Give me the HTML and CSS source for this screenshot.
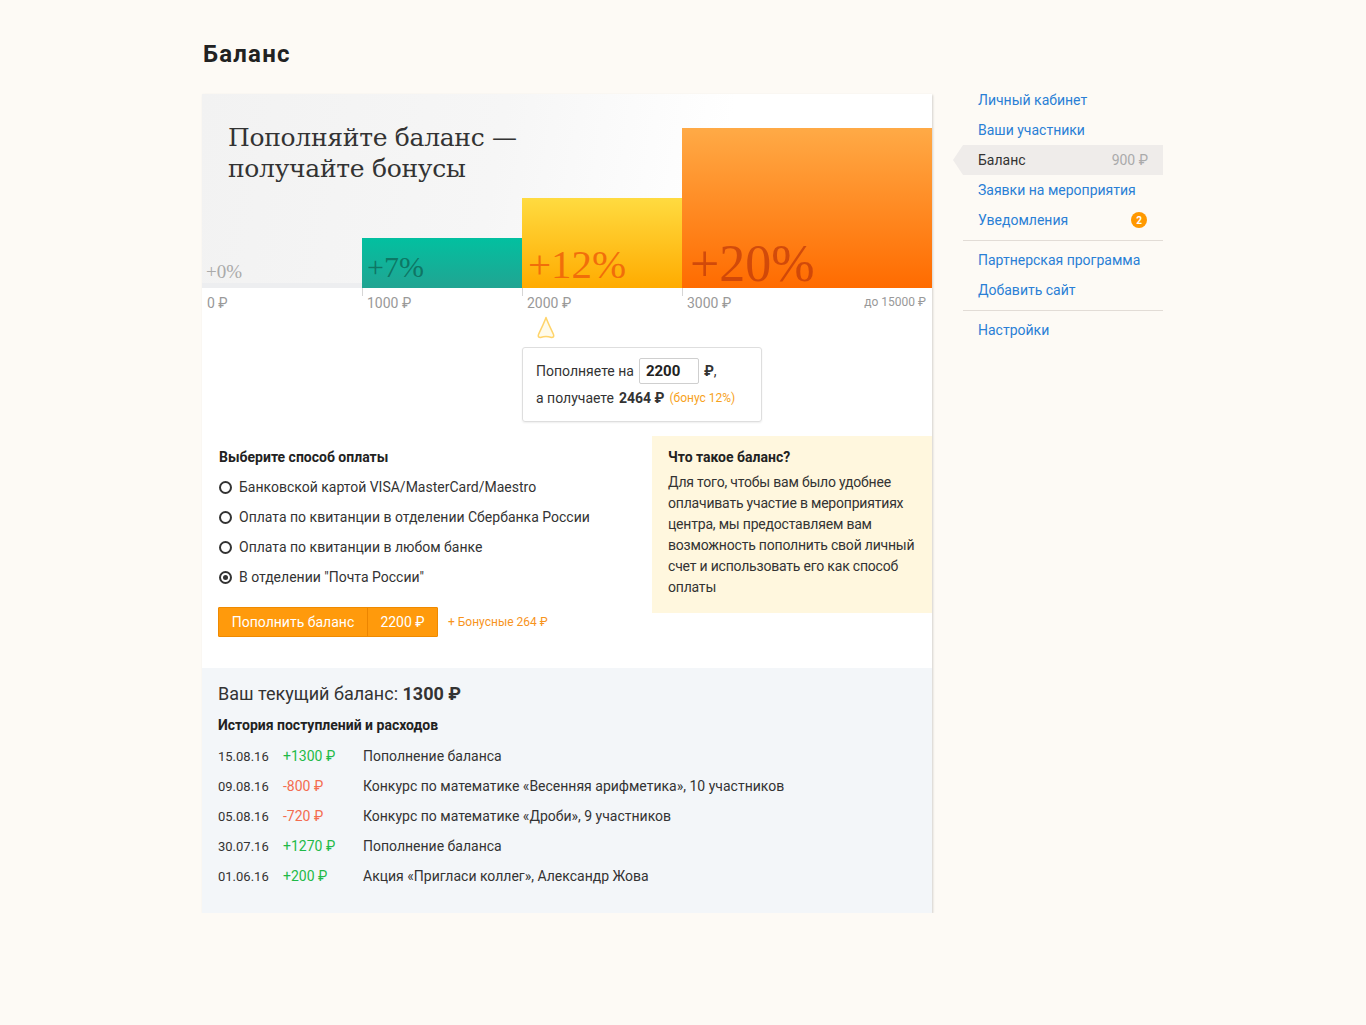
FILE: index.html
```html
<!DOCTYPE html>
<html lang="ru">
<head>
<meta charset="utf-8">
<title>Баланс</title>
<link rel="stylesheet" href="styles.css">
</head>
<body>
<div class="page">
  <h1 class="page-title">Баланс</h1>
  <div class="layout">
    <main class="card">
      <section class="hero">
        <h2 class="hero-title">Пополняйте баланс —<br>получайте бонусы</h2>
        <div class="bars">
          <div class="seg seg-0"><div class="bar"><span class="pct">+0%</span></div></div>
          <div class="seg seg-7"><div class="bar"><span class="pct">+7%</span></div></div>
          <div class="seg seg-12"><div class="bar"><span class="pct">+12%</span></div></div>
          <div class="seg seg-20"><div class="bar"><span class="pct">+20%</span></div></div>
        </div>
      </section>
      <div class="scale">
        <div class="tick tick-first">0 ₽</div>
        <div class="tick">1000 ₽</div>
        <div class="tick">2000 ₽</div>
        <div class="tick tick-last"><span>3000 ₽</span><span class="max">до 15000 ₽</span></div>
      </div>
      <div class="calc">
        <svg class="pointer" width="20" height="24" viewBox="0 0 20 24"><path d="M10 1.5 C11.5 6 15 13 17.5 18.5 Q18.5 21.5 15.5 21.5 Q10 19.5 4.5 21.5 Q1.5 21.5 2.5 18.5 C5 13 8.5 6 10 1.5 Z" fill="#fffbea" stroke="#ffd46a" stroke-width="1.5" stroke-linejoin="round"/></svg>
        <div class="popup">
          <div class="popup-line">Пополняете на <span class="amount-input">2200</span> <span><b>₽</b>,</span></div>
          <div class="popup-line">а получаете <b>2464 ₽</b> <span class="bonus">(бонус 12%)</span></div>
        </div>
      </div>
      <section class="pay">
        <div class="pay-main">
          <h3 class="pay-title">Выберите способ оплаты</h3>
          <ul class="options">
            <li class="option"><span class="radio"></span>Банковской картой VISA/MasterCard/Maestro</li>
            <li class="option"><span class="radio"></span>Оплата по квитанции в отделении Сбербанка России</li>
            <li class="option"><span class="radio"></span>Оплата по квитанции в любом банке</li>
            <li class="option"><span class="radio radio-on"></span>В отделении "Почта России"</li>
          </ul>
          <div class="actions">
            <button class="btn"><span class="btn-label">Пополнить баланс</span><span class="btn-sum">2200 ₽</span></button>
            <span class="extra">+ Бонусные 264 ₽</span>
          </div>
        </div>
        <aside class="info">
          <h4 class="info-title">Что такое баланс?</h4>
          <p class="info-text">Для того, чтобы вам было удобнее оплачивать участие в мероприятиях центра, мы предоставляем вам возможность пополнить свой личный счет и использовать его как способ оплаты</p>
        </aside>
      </section>
      <section class="history">
        <div class="current">Ваш текущий баланс: <b>1300 ₽</b></div>
        <h4 class="history-title">История поступлений и расходов</h4>
        <ul class="rows">
          <li class="row"><span class="date">15.08.16</span><span class="sum plus">+1300 ₽</span><span class="desc">Пополнение баланса</span></li>
          <li class="row"><span class="date">09.08.16</span><span class="sum minus">-800 ₽</span><span class="desc">Конкурс по математике «Весенняя арифметика», 10 участников</span></li>
          <li class="row"><span class="date">05.08.16</span><span class="sum minus">-720 ₽</span><span class="desc">Конкурс по математике «Дроби», 9 участников</span></li>
          <li class="row"><span class="date">30.07.16</span><span class="sum plus">+1270 ₽</span><span class="desc">Пополнение баланса</span></li>
          <li class="row"><span class="date">01.06.16</span><span class="sum plus">+200 ₽</span><span class="desc">Акция «Пригласи коллег», Александр Жова</span></li>
        </ul>
      </section>
    </main>
    <nav class="side">
      <ul class="menu">
        <li><a class="item" href="#">Личный кабинет</a></li>
        <li><a class="item" href="#">Ваши участники</a></li>
        <li><a class="item item-active" href="#"><span>Баланс</span><span class="item-sum">900 ₽</span></a></li>
        <li><a class="item" href="#">Заявки на мероприятия</a></li>
        <li><a class="item" href="#"><span>Уведомления</span><span class="badge">2</span></a></li>
      </ul>
      <ul class="menu menu-sep">
        <li><a class="item" href="#">Партнерская программа</a></li>
        <li><a class="item" href="#">Добавить сайт</a></li>
      </ul>
      <ul class="menu menu-sep">
        <li><a class="item" href="#">Настройки</a></li>
      </ul>
    </nav>
  </div>
</div>
</body>
</html>
```

FILE: styles.css
```css
* { box-sizing: border-box; }
body {
  margin: 0;
  background: #fdfaf5;
  font-family: Roboto, "Noto Sans", sans-serif;
  font-size: 14px;
  color: #333;
}
ul { list-style: none; margin: 0; padding: 0; }
h1, h2, h3, h4, p { margin: 0; }

.page {
  width: 962px;
  padding-right: 1px;
  margin: 0 auto;
  padding-top: 38px;
}
.page-title {
  font-size: 24px;
  font-weight: 700;
  color: #222;
  line-height: 32px;
  margin-left: 1px;
  margin-bottom: 24px;
  letter-spacing: 1.2px;
}
.layout {
  display: flex;
  align-items: flex-start;
  gap: 31px;
}

/* card */
.card {
  width: 730px;
  background: #fff;
  box-shadow: 1px 1px 2px rgba(0,0,0,0.16);
}

.hero {
  display: grid;
  height: 194px;
  background: linear-gradient(100deg, #f2f2f2 0%, #f6f6f6 40%, #ffffff 70%);
}
.hero-title, .bars { grid-area: 1 / 1; }
.hero-title {
  font-family: "DejaVu Serif", "Liberation Serif", serif;
  font-weight: 400;
  font-size: 25px;
  line-height: 31px;
  color: #333;
  padding: 28px 0 0 26px;
  letter-spacing: -0.3px;
}
.bars {
  display: flex;
  align-items: flex-end;
}
.seg { display: flex; flex-direction: column; justify-content: flex-end; }
.seg-0, .seg-7, .seg-12 { width: 160px; }
.seg-20 { width: 250px; }
.bar {
  display: flex;
  align-items: flex-end;
  position: relative;
}
.pct {
  font-family: "Liberation Serif", "DejaVu Serif", serif;
  line-height: 1;
  padding-left: 5px;
}
.seg-0 .bar {
  height: 5px;
  background: #edeef0;
}
.seg-0 .pct {
  position: absolute;
  left: 0;
  bottom: 7px;
  font-size: 19px;
  color: #aaa;
  padding-left: 4px;
}
.seg-7 .bar {
  height: 50px;
  background: linear-gradient(#02c0a0, #21a492);
}
.seg-7 .pct {
  font-size: 30px;
  color: rgba(10, 80, 66, 0.6);
  padding-bottom: 6px;
}
.seg-12 .bar {
  height: 90px;
  background: linear-gradient(#ffdb40, #ffab00);
}
.seg-12 .pct {
  font-size: 41px;
  color: rgba(240, 100, 10, 0.88);
  padding-left: 6px;
  padding-bottom: 3px;
}
.seg-20 .bar {
  height: 160px;
  background: linear-gradient(#ffaa46, #ff6b00);
}
.seg-20 .pct {
  font-size: 52px;
  color: rgba(190, 55, 10, 0.7);
  padding-left: 8px;
  margin-bottom: -2px;
}

.scale {
  display: flex;
  height: 26px;
  color: #999;
  font-size: 14px;
}
.tick {
  width: 160px;
  padding: 7px 0 0 5px;
  background: linear-gradient(#d6d6d6, #d6d6d6) no-repeat left top / 1px 8px;
}
.tick-first { background: none; }
.tick-last {
  width: 250px;
  display: flex;
  justify-content: space-between;
  padding-right: 6px;
}
.max { font-size: 12px; }

.calc {
  display: flex;
  flex-direction: column;
  align-items: flex-start;
  padding-left: 320px;
  padding-top: 2px;
}
.pointer {
  display: block;
  margin-left: 14px;
  margin-bottom: 7px;
}
.popup {
  width: 240px;
  height: 75px;
  border: 1px solid #dedede;
  border-radius: 3px;
  box-shadow: 0 1px 2px rgba(0,0,0,0.07);
  padding: 9px 13px 0;
}
.popup-line {
  display: flex;
  align-items: center;
  gap: 5px;
  height: 27px;
}
.popup-line b { font-weight: 700; }
.amount-input {
  display: inline-block;
  width: 60px;
  height: 26px;
  line-height: 24px;
  border: 1px solid #cfcfcf;
  border-radius: 2px;
  padding-left: 6px;
  font-weight: 700;
  font-size: 15px;
  color: #222;
}
.bonus { color: #f7a21b; font-size: 12px; }

/* payment */
.pay {
  display: flex;
  justify-content: space-between;
  align-items: flex-start;
  margin-top: 14px;
  padding-bottom: 31px;
}
.pay-main { padding: 12px 0 0 17px; }
.pay-title { font-size: 14px; font-weight: 700; line-height: 18px; color: #222; margin-bottom: 6px; }
.option {
  display: flex;
  align-items: center;
  gap: 7px;
  height: 30px;
}
.radio {
  width: 13px;
  height: 13px;
  border: 2px solid #333;
  border-radius: 50%;
  display: flex;
  align-items: center;
  justify-content: center;
}
.radio-on::after {
  content: "";
  width: 5px;
  height: 5px;
  border-radius: 50%;
  background: #333;
}
.actions {
  display: flex;
  align-items: center;
  gap: 10px;
  margin-top: 15px;
  margin-left: -1px;
}
.btn {
  display: flex;
  height: 30px;
  padding: 0;
  border: 1px solid #ef8a00;
  background: #ff9a0c;
  color: #fff;
  font-family: inherit;
  font-size: 14px;
  border-radius: 1px;
}
.btn-label, .btn-sum {
  display: flex;
  align-items: center;
  justify-content: center;
  height: 28px;
}
.btn-label { width: 149px; border-right: 1px solid #ec8500; }
.btn-sum { width: 69px; }
.extra { color: #f7941d; font-size: 12px; }

.info {
  width: 280px;
  background: #fff7de;
  padding: 13px 10px 15px 16px;
  color: #333;
}
.info-title { font-size: 14px; font-weight: 700; line-height: 16px; color: #222; margin-bottom: 7px; }
.info-text { font-size: 14px; line-height: 21px; letter-spacing: -0.2px; }

/* history */
.history {
  background: #f3f6f9;
  padding: 14px 16px 22px;
}
.current { font-size: 18px; line-height: 24px; color: #333; }
.current b { font-weight: 700; }
.history-title { font-size: 14px; font-weight: 700; line-height: 18px; color: #222; margin-top: 10px; margin-bottom: 7px; }
.row { display: flex; align-items: center; height: 30px; }
.date { width: 65px; font-size: 13px; }
.sum { width: 80px; }
.plus { color: #1fba48; }
.minus { color: #f36c4f; }

/* sidebar */
.side { width: 200px; margin-top: -9px; }
.item {
  display: flex;
  justify-content: space-between;
  align-items: center;
  height: 30px;
  padding: 0 15px;
  color: #2a7fd5;
  text-decoration: none;
  position: relative;
}
.item-active {
  background: #efecea;
  color: #333;
}
.item-active::before {
  content: "";
  position: absolute;
  left: -10px;
  top: 0;
  border-style: solid;
  border-width: 15px 10px 15px 0;
  border-color: transparent #efecea transparent transparent;
}
.item-sum { color: #aaa; }
.badge {
  width: 16px;
  height: 16px;
  border-radius: 50%;
  background: #ff9800;
  color: #fff;
  font-size: 10px;
  font-weight: 700;
  display: flex;
  align-items: center;
  justify-content: center;
  margin-right: 1px;
}
.menu-sep {
  border-top: 1px solid #e2dcd6;
  margin-top: 5px;
  padding-top: 4px;
}
```
